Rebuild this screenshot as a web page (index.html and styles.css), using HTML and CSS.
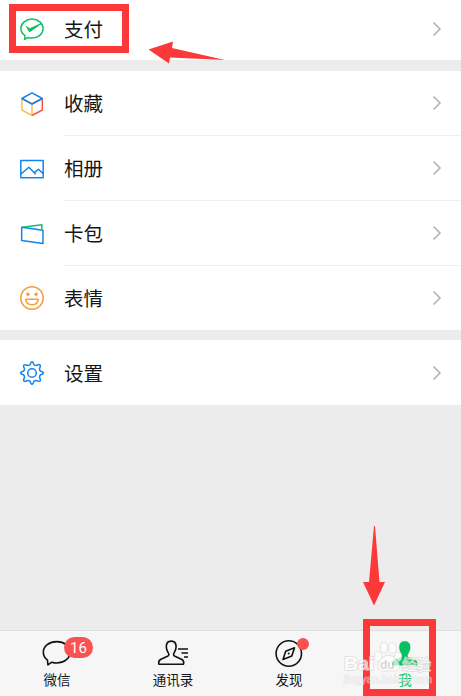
FILE: index.html
```html
<!DOCTYPE html>
<html lang="zh-CN">
<head>
    <meta charset="UTF-8">
    <meta name="viewport" content="width=device-width, initial-scale=1.0">
    <title>我</title>
    <link rel="stylesheet" href="styles.css">
</head>
<body>
    <div class="page">
        <div class="group">
            <div class="row pay">
                <svg class="icon" viewBox="0 0 24 24" stroke="#0fc15f">
                    <path d="M5 18.600C2.400 16.900.9 14.400.9 11.600C.9 6.300 5.900 2.100 12 2.100s11.100 4.200 11.100 9.500-5 9.500-11.100 9.500c-1.500 0-2.800-.2-4.100-.6L4.600 22.300z"/>
                    <path d="M6.400 9.400l3.300 2.400L21.200 6.600L9.500 14.900z" fill="#0fc15f" stroke-width="1"/>
                </svg>
                <span class="label">支付</span>
                <svg class="chevron" viewBox="0 0 10 16"><path d="M1.500 1.500L8 8L1.500 14.500"/></svg>
            </div>
        </div>
        <div class="group">
            <div class="row">
                <svg class="icon" viewBox="0 0 24 24">
                    <path d="M1.900 6.500V18L12 23.500V12z" stroke="#fdc04a"/>
                    <path d="M12 12L22.300 6.500V18L12 23.500" stroke="#f9514f"/>
                    <path d="M1.900 6.500L12 .9L22.300 6.500L12 12z" stroke="#1485ee"/>
                </svg>
                <div class="line">
                    <span class="label">收藏</span>
                    <svg class="chevron" viewBox="0 0 10 16"><path d="M1.500 1.500L8 8L1.500 14.500"/></svg>
                </div>
            </div>
            <div class="row">
                <svg class="icon" viewBox="0 0 24 24" stroke="#1485ee">
                    <path d="M.8 3.400H23.200V20.800H.8zM.8 17.300L8.800 10.200L15.800 17.300M14.200 15.700L18.500 12.300L23.200 16.700"/>
                </svg>
                <div class="line">
                    <span class="label">相册</span>
                    <svg class="chevron" viewBox="0 0 10 16"><path d="M1.500 1.500L8 8L1.500 14.500"/></svg>
                </div>
            </div>
            <div class="row">
                <svg class="icon" viewBox="0 0 24 24">
                    <path d="M2.500 5.200L21.800 2.700V7.500" stroke="#16be70"/>
                    <path d="M1.700 5.300L23 8.200V21.600L1.700 18.400z" stroke="#1485ee"/>
                </svg>
                <div class="line">
                    <span class="label">卡包</span>
                    <svg class="chevron" viewBox="0 0 10 16"><path d="M1.500 1.500L8 8L1.500 14.500"/></svg>
                </div>
            </div>
            <div class="row last">
                <svg class="icon" viewBox="0 0 24 24" stroke="#fa9d3b">
                    <circle cx="12" cy="12" r="11.200"/>
                    <path d="M5.800 13.200H18.200C17.900 16.600 15.300 18.700 12 18.700S6.100 16.600 5.800 13.200z"/>
                    <circle cx="7.900" cy="8.200" r="1.700" fill="#fa9d3b" stroke="none"/>
                    <circle cx="16.100" cy="8.200" r="1.700" fill="#fa9d3b" stroke="none"/>
                </svg>
                <div class="line">
                    <span class="label">表情</span>
                    <svg class="chevron" viewBox="0 0 10 16"><path d="M1.500 1.500L8 8L1.500 14.500"/></svg>
                </div>
            </div>
        </div>
        <div class="group">
            <div class="row last">
                <svg class="icon" viewBox="0 0 24 24" stroke="#1485ee">
                    <path d="M10.300 3.300Q10.800.7 12 .7T13.700 3.300Q14.800 4.900 16.900 4.300Q19.200 2.900 20 4T19.700 7.100Q19.100 9.200 20.700 10.300Q23.300 10.800 23.300 12T20.700 13.700Q19.100 14.800 19.700 16.900Q21.100 19.200 20 20T16.900 19.700Q14.800 19.100 13.700 20.700Q13.200 23.300 12 23.300T10.300 20.700Q9.200 19.100 7.100 19.700Q4.800 21.100 4 20T4.300 16.900Q4.900 14.800 3.300 13.700Q.7 13.200.7 12T3.300 10.300Q4.900 9.200 4.300 7.100Q2.900 4.800 4 4T7.100 4.300Q9.200 4.900 10.300 3.300z"/>
                    <circle cx="12" cy="12" r="4.300"/>
                </svg>
                <div class="line">
                    <span class="label">设置</span>
                    <svg class="chevron" viewBox="0 0 10 16"><path d="M1.500 1.500L8 8L1.500 14.500"/></svg>
                </div>
            </div>
        </div>
    </div>

    <div class="tabs">
        <div class="tab">
            <div class="tab-icon">
                <svg viewBox="0 0 32 30"><path d="M6.500 22.200C3.800 20.200 2.300 17.300 2.300 14.300C2.300 8.300 8.300 3.600 15.700 3.600S29.100 8.300 29.100 14.300S23.100 25 15.700 25c-1.800 0-3.300-.3-4.900-.8L6.900 26.800z"/></svg>
                <span class="badge">16</span>
            </div>
            <span class="tab-text">微信</span>
        </div>
        <div class="tab">
            <div class="tab-icon">
                <svg viewBox="0 0 32 30">
                    <path d="M2 26.200C1.200 24 2.300 22 4.500 21L10.500 18.300C12.500 17.300 12 15.900 11 14.300C9.700 12.200 9.300 10.800 9.300 8.700C9.300 5.200 11.200 3.100 14.200 3.100S19.100 5.200 19.100 8.700C19.100 10.800 18.700 12.200 17.400 14.300C16.400 15.900 15.900 17.300 17.900 18.300L23.900 21C26.100 22 27.200 24 26.400 26.200z"/>
                    <path d="M21 11H31M24.500 15H31M27 19H31"/>
                </svg>
            </div>
            <span class="tab-text">通讯录</span>
        </div>
        <div class="tab">
            <div class="tab-icon">
                <svg viewBox="0 0 32 30">
                    <circle cx="15.800" cy="15.500" r="12.700"/>
                    <path d="M21.500 9.800L18.800 18L10 21.400L12.700 13.200z"/>
                    <circle cx="15.700" cy="15.600" r="1" fill="#111" stroke="none"/>
                </svg>
                <span class="dot"></span>
            </div>
            <span class="tab-text">发现</span>
        </div>
        <div class="tab active">
            <div class="tab-icon">
                <svg viewBox="0 0 32 30"><path d="M3.100 27.500C2.300 24.500 3.500 22.600 6 21.600L11.500 19.400C13.700 18.400 13 16.700 12 15.200C10.700 13.200 10.200 11.300 10.200 9.100C10.200 5.200 12.300 3.200 15.800 3.200S21.400 5.200 21.400 9.100C21.400 11.300 20.900 13.200 19.600 15.200C18.600 16.700 17.900 18.400 20.100 19.400L25.600 21.600C28.100 22.600 29.300 24.500 28.500 27.500z"/></svg>
            </div>
            <span class="tab-text">我</span>
        </div>
    </div>

    <!-- red marks over the screen -->
    <div class="box box-pay"></div>
    <svg class="arrow arrow-left" viewBox="0 0 78 24"><path d="M.5 8.500L25 .5L24 7L77 19L22 16.500L21 22.500z"/></svg>
    <svg class="arrow arrow-down" viewBox="0 0 22 80"><path d="M11 0h1L16.500 56H22L11 79.500L0 56H6z"/></svg>
    <div class="box box-me"></div>

    <svg class="watermark" viewBox="0 0 98 50">
        <ellipse cx="36" cy="18.500" rx="3.300" ry="4.400"/>
        <ellipse cx="42" cy="9.500" rx="3.400" ry="4.800"/>
        <ellipse cx="50.500" cy="10" rx="3.400" ry="4.800"/>
        <ellipse cx="56" cy="19" rx="3.300" ry="4.400"/>
        <path d="M46 17.500C41 18 35 25 36.500 29.500S43 32.500 46.500 32.500S56 33.500 57 29S51 17 46 17.500z"/>
        <text class="wm-big" x="2" y="32" textLength="30" lengthAdjust="spacingAndGlyphs">Bai</text>
        <text class="wm-du" x="38" y="31">du</text>
        <text class="wm-cn" x="60" y="32">经验</text>
        <text class="wm-url" x="2" y="44.500" textLength="88">jingyan.baidu.com</text>
    </svg>
</body>
</html>
```
FILE: styles.css
```css
* {
    box-sizing: border-box;
}
body {
    margin: 0;
    height: 696px;
    overflow: hidden;
    position: relative;
    display: flex;
    flex-direction: column;
    background: #ececec;
    color: #161616;
    font-family: "Noto Sans CJK SC", sans-serif;
}
.page {
    flex: 1;
}
.group {
    background: #fff;
    margin-bottom: 10px;
}
.group:first-child {
    margin-bottom: 11px;
}
.row {
    display: flex;
    align-items: center;
    height: 65px;
    padding-left: 20px;
}
.row.pay {
    height: 60px;
    padding-bottom: 3px;
    padding-right: 19px;
}
.group:nth-child(2) .row:last-child {
    height: 64px;
}
.icon {
    width: 24px;
    height: 24px;
    margin-right: 20px;
    fill: none;
    stroke-width: 1.5;
    stroke-linejoin: round;
}
.line {
    flex: 1;
    height: 100%;
    display: flex;
    align-items: center;
    padding-right: 19px;
    border-bottom: 1px solid #efefef;
}
.last .line {
    border-bottom: none;
}
.label {
    flex: 1;
    font-size: 19.5px;
    line-height: 28px;
}
.chevron {
    width: 10px;
    height: 16px;
    fill: none;
    stroke: #b0b0b0;
    stroke-width: 1.5;
}

.tabs {
    display: flex;
    height: 66px;
    width: 464px;
    margin-left: -1px;
    background: #f6f6f6;
    border-top: 1px solid #dedede;
}
.tab {
    width: 116px;
    display: flex;
    flex-direction: column;
    align-items: center;
    padding-top: 7px;
}
.tab-icon {
    position: relative;
    width: 32px;
    height: 30px;
}
.tab-icon svg {
    display: block;
    width: 32px;
    height: 30px;
    fill: none;
    stroke: #111;
    stroke-width: 1.6;
    stroke-linejoin: round;
}
.tab-text {
    font-size: 13.5px;
    line-height: 20px;
    margin-top: 1px;
}
.active {
    color: #07c160;
}
.tab.active svg {
    fill: #07c160;
    stroke: none;
}
.badge {
    position: absolute;
    left: 23px;
    top: -1px;
    width: 29px;
    height: 21px;
    border-radius: 11px;
    background: #fa5151;
    color: #fff;
    font: 15px/22px Roboto, sans-serif;
    text-align: center;
}
.dot {
    position: absolute;
    left: 24px;
    top: 0;
    width: 12px;
    height: 12px;
    border-radius: 50%;
    background: #fa5151;
}

.box {
    position: absolute;
    border: 7px solid #fd3838;
}
.box-pay {
    left: 9px;
    top: 4px;
    width: 120px;
    height: 49px;
}
.box-me {
    left: 363px;
    top: 619px;
    width: 73px;
    height: 77px;
}
.arrow {
    position: absolute;
    fill: #fd3838;
}
.arrow-left {
    left: 148px;
    top: 41px;
    width: 78px;
    height: 24px;
}
.arrow-down {
    left: 363px;
    top: 526px;
    width: 22px;
    height: 80px;
}

.watermark {
    position: absolute;
    left: 342px;
    top: 638px;
    width: 98px;
    height: 50px;
    fill: #fff;
    stroke: #d4d4d4;
    stroke-width: 1.6;
    paint-order: stroke;
    opacity: 0.7;
}
.wm-big {
    font: bold 19px "Liberation Sans", sans-serif;
}
.wm-du {
    font: bold 12px "Liberation Sans", sans-serif;
    fill: #ccc;
    stroke: none;
}
.wm-cn {
    font: 14.5px "Noto Sans CJK SC", sans-serif;
}
.wm-url {
    font: 10.5px "Liberation Sans", sans-serif;
    fill: #f4f4f4;
    stroke-width: 1;
    opacity: 0.7;
}
```
